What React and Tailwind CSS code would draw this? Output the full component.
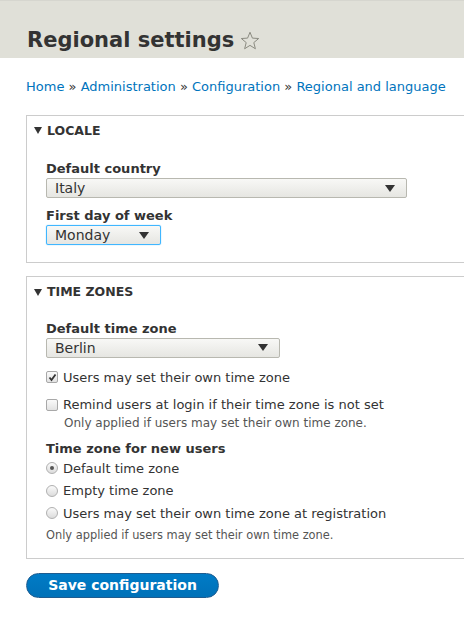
import React from "react";

const font = { fontFamily: '"DejaVu Sans", "Liberation Sans", sans-serif' };

function Select({ value, width, focused }) {
  return (
    <div
      className={`flex h-[20px] items-center justify-between rounded-[2px] border bg-gradient-to-b from-[#f8f8f6] to-[#e6e6e2] pl-[8px] pr-[11px] text-[14px] leading-none text-[#333] ${
        focused ? "border-[#40b6ff] shadow-[0_0_1px_#40b6ff]" : "border-[#b8b8b0]"
      }`}
      style={{ width }}
    >
      <span>{value}</span>
      <svg width="10" height="7" viewBox="0 0 10 7">
        <path d="M0 0 L10 0 L5 7 Z" fill="#333" />
      </svg>
    </div>
  );
}

function Legend({ children }) {
  return (
    <div className="flex items-center gap-[5px] pl-[7px] pt-[9px] text-[12.5px] font-bold uppercase leading-none text-[#333]">
      <svg width="8" height="7" viewBox="0 0 8 7">
        <path d="M0 0 L8 0 L4 7 Z" fill="#333" />
      </svg>
      <span>{children}</span>
    </div>
  );
}

function Checkbox({ checked, label }) {
  return (
    <div className="flex items-center gap-[5px] text-[13px] text-[#333]">
      <span className="flex h-[12px] w-[12px] items-center justify-center rounded-[2px] border border-[#a8a8a8] bg-gradient-to-b from-[#fafafa] to-[#e2e2e2]">
        {checked && (
          <svg width="9" height="9" viewBox="0 0 9 9">
            <path d="M1.5 4.5 L3.5 7 L7.5 1.5" stroke="#333" strokeWidth="1.8" fill="none" />
          </svg>
        )}
      </span>
      <span>{label}</span>
    </div>
  );
}

function Radio({ checked, label }) {
  return (
    <div className="flex items-center gap-[5px] text-[13px] text-[#333]">
      <span className="flex h-[12px] w-[12px] items-center justify-center rounded-full border border-[#b0b0b0] bg-gradient-to-b from-[#fafafa] to-[#dcdcdc]">
        {checked && <span className="h-[4px] w-[4px] rounded-full bg-[#555]" />}
      </span>
      <span>{label}</span>
    </div>
  );
}

export default function App() {
  return (
    <div className="h-[620px] w-[464px] overflow-hidden bg-white" style={font}>
      <div className="h-[58px] border-t border-[#d6d6cf] bg-[#e0e0d8] pl-[27px] pt-[29px]">
        <h1 className="flex items-center gap-[6px] text-[21px] font-bold leading-none text-[#333]">
          Regional settings
          <svg width="20" height="19" viewBox="0 0 24 23">
            <path
              d="M12 1.5 L14.9 8.6 L22.5 9.1 L16.6 14 L18.5 21.5 L12 17.4 L5.5 21.5 L7.4 14 L1.5 9.1 L9.1 8.6 Z"
              fill="none"
              stroke="#8a8a80"
              strokeWidth="1.2"
              strokeLinejoin="round"
            />
          </svg>
        </h1>
      </div>

      <div className="pl-[26px] pt-[19px] text-[13px] text-[#0074bd]">
        Home <span className="text-[#333]">»</span> Administration{" "}
        <span className="text-[#333]">»</span> Configuration{" "}
        <span className="text-[#333]">»</span> Regional and language
      </div>

      <div className="ml-[26px] mt-[18px] w-[460px] border border-[#ccc] pb-[17px]">
        <Legend>Locale</Legend>
        <div className="pl-[19px] pt-[23px]">
          <div className="text-[13px] font-bold leading-[18px] text-[#333]">Default country</div>
          <Select value="Italy" width={361} />
          <div className="mt-[9px] text-[13px] font-bold leading-[18px] text-[#333]">First day of week</div>
          <Select value="Monday" width={115} focused />
        </div>
      </div>

      <div className="ml-[26px] mt-[13px] w-[460px] border border-[#ccc] pb-[14px]">
        <Legend>Time zones</Legend>
        <div className="pl-[19px] pt-[21px]">
          <div className="text-[13px] font-bold leading-[18px] text-[#333]">Default time zone</div>
          <Select value="Berlin" width={234} />
          <div className="mt-[10px]">
            <Checkbox checked label="Users may set their own time zone" />
          </div>
          <div className="mt-[8px]">
            <Checkbox label="Remind users at login if their time zone is not set" />
            <div className="pl-[18px] text-[12px] leading-[17px] text-[#555]">
              Only applied if users may set their own time zone.
            </div>
          </div>
          <div className="mt-[8px] text-[13px] font-bold leading-[18px] text-[#333]">Time zone for new users</div>
          <div className="mt-[1px] flex flex-col gap-[3px]">
            <Radio checked label="Default time zone" />
            <Radio label="Empty time zone" />
            <Radio label="Users may set their own time zone at registration" />
          </div>
          <div className="mt-[4px] text-[11.4px] text-[#555]">Only applied if users may set their own time zone.</div>
        </div>
      </div>

      <button className="ml-[26px] mt-[14px] h-[25px] w-[193px] rounded-full border border-[#1e5c90] bg-gradient-to-b from-[#007bc6] to-[#0071b8] text-[14px] font-bold text-white">
        Save configuration
      </button>
    </div>
  );
}
